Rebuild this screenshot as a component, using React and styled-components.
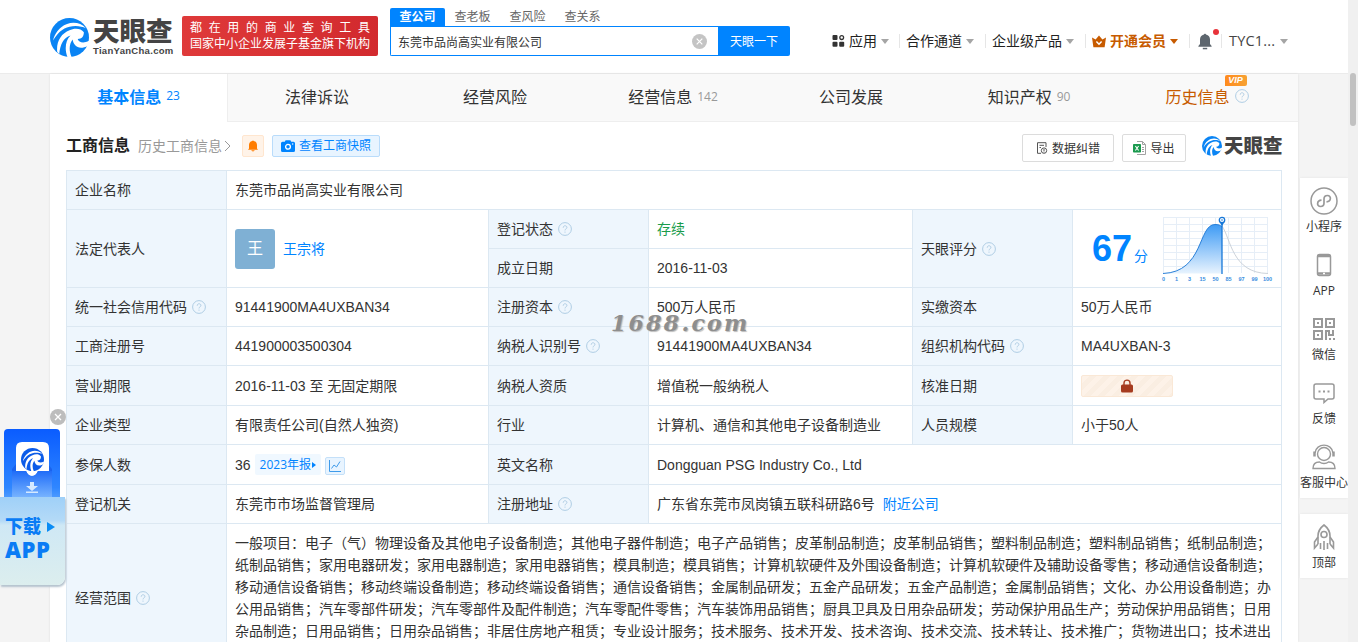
import React, { useState } from 'react';
import styled, { createGlobalStyle } from 'styled-components';

const blue = '#0084ff';
const line = '#dce8f2';

// --- 스타일 정의 (styled-components) --- //

const GlobalStyle = createGlobalStyle`
  * { box-sizing: border-box; }

  body {
    margin: 0;
    overflow: hidden;
    background: #f4f4f4;
    color: #333;
    font-family: "Liberation Sans", "Noto Sans CJK SC", sans-serif;
    font-size: 14px;
    text-spacing-trim: space-all;
  }

  button {
    padding: 0;
    font-family: inherit;
    cursor: pointer;
  }

  svg { display: block; flex: none; }
`;

const PageWrapper = styled.div`
  position: relative;
  display: flex;
  width: 1358px;
  height: 642px;
  overflow: hidden;
`;

const Page = styled.div`
  width: 1348px;
`;

const Scrollbar = styled.div`
  width: 10px;
  padding: 73px 2px 0;
  background: #f0f0f0;
`;

const ScrollThumb = styled.div`
  height: 53px;
  border-radius: 3px;
  background: #c1c1c1;
`;

const Header = styled.header`
  display: flex;
  align-items: flex-start;
  height: 74px;
  padding-left: 50px;
  background: #fff;
  border-bottom: 1px solid #ebebeb;
`;

const LogoBox = styled.div`
  display: flex;
  gap: 4px;
  width: 132px;
  padding-top: 18px;
`;

const LogoText = styled.div`
  display: flex;
  flex-direction: column;

  .name {
    height: 26px;
    line-height: 28px;
    font-size: 26.5px;
    font-weight: 900;
    color: #444;
    white-space: nowrap;
  }

  .domain {
    margin-top: 1px;
    line-height: 11px;
    font-size: 9.5px;
    font-weight: bold;
    letter-spacing: 0.3px;
    color: #444;
  }
`;

const Slogan = styled.div`
  width: 196px;
  height: 40px;
  margin-top: 16px;
  padding: 4px 8px;
  border-radius: 2px;
  background: linear-gradient(90deg, #df3a3a, #d22a2e);
  color: #fff;
  font-size: 12px;
  line-height: 16px;
  white-space: nowrap;

  .spread {
    display: flex;
    justify-content: space-between;
  }
`;

const SearchBox = styled.div`
  width: 400px;
  margin: 8px 42px 0 12px;
`;

const SearchTabs = styled.div`
  display: flex;
  height: 18px;
`;

const SearchTab = styled.div`
  width: 55px;
  line-height: 18px;
  border-radius: 2px 2px 0 0;
  background: ${({ $active }) => ($active ? blue : 'transparent')};
  color: ${({ $active }) => ($active ? '#fff' : '#666')};
  font-size: 12px;
  font-weight: ${({ $active }) => ($active ? 700 : 400)};
  text-align: center;
`;

const SearchRow = styled.div`
  display: flex;
  height: 30px;
`;

const SearchField = styled.div`
  display: flex;
  align-items: center;
  justify-content: space-between;
  width: 328px;
  padding: 0 11px 0 7px;
  border: 1px solid ${blue};
  border-right: none;
  border-radius: 0 0 0 2px;

  input {
    flex: 1;
    padding: 0;
    border: none;
    outline: none;
    background: none;
    color: #333;
    font-family: inherit;
    font-size: 12px;
  }
`;

const SearchButton = styled.button`
  width: 72px;
  padding-bottom: 2px;
  border: none;
  border-radius: 0 2px 2px 0;
  background: ${blue};
  color: #fff;
  font-size: 12px;
`;

const Nav = styled.nav`
  display: flex;
  align-items: center;
  height: 14px;
  margin-top: 34px;
`;

const NavItem = styled.div`
  display: flex;
  align-items: center;
  gap: 4px;
  height: 14px;
  padding: ${({ $first }) => ($first ? '0 10px 0 0' : '0 11px 0 6px')};
  border-left: ${({ $first }) => ($first ? 'none' : '1px solid #e6e6e6')};
  color: ${({ $vip }) => ($vip ? '#c75b00' : '#222')};
  font-weight: ${({ $vip }) => ($vip ? 700 : 400)};
  line-height: 14px;
  white-space: nowrap;
`;

const UserName = styled.span`
  width: 47px;
  margin-left: 1px;
  font-family: "Open Sans", sans-serif;
  font-size: 14.5px;
  letter-spacing: 0.2px;
  color: #444;
`;

const BellBox = styled.div`
  position: relative;
  margin: 0 -2px 0 2px;

  .dot {
    position: absolute;
    top: -4px;
    right: -7px;
    width: 6px;
    height: 6px;
    border-radius: 50%;
    background: #e8333a;
  }
`;

const Caret = styled.i`
  border: 4px solid transparent;
  border-top: 5px solid ${({ $vip }) => ($vip ? '#c75b00' : '#a5a5a5')};
  border-bottom: none;
`;

const Body = styled.div`
  display: flex;
  padding-left: 50px;
`;

const Main = styled.main`
  width: 1248px;
  height: 568px;
  background: #fff;
  box-shadow: 0 0 2px #ddd;
`;

const Tabs = styled.div`
  display: flex;
  height: 48px;
  border-bottom: 1px solid #eee;
  background: #f9f9f9;
`;

const Tab = styled.div`
  flex: none;
  display: flex;
  align-items: center;
  justify-content: center;
  gap: 5px;
  width: 178px;
  padding-bottom: ${({ $active }) => ($active ? 5 : 3)}px;
  background: ${({ $active }) => ($active ? '#fff' : 'transparent')};
  border-right: ${({ $active }) => ($active ? '1px solid #eee' : 'none')};
  margin-bottom: ${({ $active }) => ($active ? '-1px' : '0')};
  color: ${({ $active, $vip }) => ($active ? blue : $vip ? '#c75b00' : '#333')};
  font-size: 16px;
  font-weight: ${({ $active }) => ($active ? 700 : 400)};

  .count {
    color: ${({ $active }) => ($active ? blue : '#999')};
    font-family: "Open Sans", sans-serif;
    font-size: 12px;
    font-weight: 400;
  }
`;

const TabHelp = styled.span`
  position: relative;
`;

const VipBadge = styled.span`
  position: absolute;
  top: -14px;
  left: -10px;
  width: 22px;
  height: 11px;
  border-radius: 2px 2px 2px 0;
  background: linear-gradient(90deg, #ff8a1e, #f7a233);
  color: #fff;
  font-size: 9px;
  font-style: italic;
  font-weight: bold;
  line-height: 11px;
  text-align: center;
`;

const SectionHead = styled.div`
  display: flex;
  align-items: center;
  height: 48px;
  padding: 0 16px;

  h2 {
    margin: 0 8px 0 0;
    font-size: 16px;
    line-height: 20px;
    color: #222;
  }

  .history {
    display: flex;
    align-items: center;
    gap: 1px;
    width: 104px;
    line-height: 20px;
    color: #999;
  }
`;

const BellTag = styled.span`
  display: flex;
  align-items: center;
  justify-content: center;
  width: 22px;
  height: 22px;
  border: 1px solid #ffe6cf;
  border-radius: 2px;
  background: #fff3e8;
`;

const SnapshotTag = styled.span`
  display: flex;
  align-items: center;
  justify-content: center;
  gap: 4px;
  width: 108px;
  height: 22px;
  margin-left: 8px;
  border: 1px solid #b9dcfb;
  border-radius: 2px;
  background: #e8f4ff;
  color: ${blue};
  font-size: 12px;
  line-height: 18px;
`;

const HeadActions = styled.div`
  display: flex;
  align-items: center;
  margin: 3px 0 0 auto;
`;

const ActionButton = styled.button`
  display: flex;
  align-items: center;
  justify-content: center;
  gap: 4px;
  width: ${({ $width }) => $width}px;
  height: 28px;
  margin-right: ${({ $gap }) => $gap}px;
  border: 1px solid #dcdcdc;
  border-radius: 2px;
  background: #fff;
  color: #333;
  font-size: 12px;
`;

const SmallLogo = styled.div`
  display: flex;
  align-items: center;
  gap: 2px;
  width: 80px;
  margin-top: -4px;
  font-size: 19.5px;
  font-weight: 900;
  line-height: 20px;
  color: #444;
  white-space: nowrap;
`;

const InfoGrid = styled.div`
  display: grid;
  grid-template-columns: 159px 261px 159px 263px 159px 208px;
  grid-template-rows: 38px 38px 38px 38px 38px 39px 38px 39px 38px 148px;
  gap: 1px;
  width: 1216px;
  margin: 0 16px;
  border: 1px solid ${line};
  background: ${line};
`;

const Cell = styled.div`
  display: flex;
  align-items: center;
  grid-row: span ${({ $rows }) => $rows || 1};
  grid-column: span ${({ $cols }) => $cols || 1};
  padding: 0 8px;
  background: ${({ $label }) => ($label ? '#eef6fd' : '#fff')};
  color: ${({ $color }) => $color || '#333'};
  line-height: 20px;
  white-space: nowrap;

  svg.help { margin-left: 5px; }
`;

const Avatar = styled.span`
  width: 40px;
  height: 40px;
  margin-right: 8px;
  border-radius: 3px;
  background: #7fb0d4;
  color: #fff;
  font-size: 16px;
  line-height: 40px;
  text-align: center;
`;

const Link = styled.a`
  color: ${blue};
  margin-left: ${({ $gap }) => $gap || 0}px;
`;

const Score = styled.div`
  display: flex;
  align-items: baseline;
  gap: 2px;
  width: 70px;
  margin-left: 11px;
  color: ${blue};

  b {
    font-size: 36px;
    line-height: 40px;
  }
`;

const LockedValue = styled.span`
  display: flex;
  align-items: center;
  justify-content: center;
  width: 92px;
  height: 22px;
  border: 1px solid #fae8d6;
  border-radius: 2px;
  background: repeating-linear-gradient(135deg, #fdf2e8 0 5px, #faeee2 5px 10px);
`;

const ReportTag = styled.span`
  display: flex;
  align-items: center;
  gap: 1px;
  height: 21px;
  margin: 0 4px;
  padding: 0 5px;
  border-radius: 2px;
  background: #f0f8ff;
  color: ${blue};
  font-family: "Open Sans", "Noto Sans CJK SC", sans-serif;
  font-size: 12px;

  i {
    border: 3px solid transparent;
    border-left: 4px solid ${blue};
    border-right: none;
  }
`;

const TrendTag = styled.span`
  display: flex;
  align-items: center;
  justify-content: center;
  width: 20px;
  height: 18px;
  margin-top: 2px;
  border: 1px solid #c4e0f9;
  border-radius: 2px;
  background: #e8f4ff;
`;

const Scope = styled.div`
  align-self: flex-start;
  padding-top: 8px;
  line-height: 22px;
`;

const SideBar = styled.aside`
  display: flex;
  flex-direction: column;
  gap: 16px;
  width: 48px;
  margin-left: 2px;
  padding-top: 104px;
`;

const SideGroup = styled.div`
  background: #fff;
  box-shadow: 0 0 2px #e4e4e4;
`;

const SideItem = styled.div`
  display: flex;
  flex-direction: column;
  align-items: center;
  justify-content: space-between;
  height: 64px;
  padding: 8px 0 6px;
  font-family: "Open Sans", "Noto Sans CJK SC", sans-serif;
  font-size: 12px;
  line-height: 18px;
  white-space: nowrap;

  .icon {
    display: flex;
    align-items: center;
    height: 30px;
  }
`;

const Watermark = styled.div`
  position: absolute;
  top: 315px;
  left: 611px;
  color: #8e8e8e;
  font-family: "DejaVu Serif", serif;
  font-size: 22px;
  font-style: italic;
  font-weight: bold;
  line-height: 16px;
  letter-spacing: 2.3px;
  text-shadow: 1px 1px 1px #bbb;
`;

const Download = styled.div`
  position: absolute;
  top: 429px;
  left: 0;
  width: 65px;
  height: 157px;
`;

const DownloadTop = styled.div`
  width: 56px;
  height: 90px;
  margin-left: 3.5px;
  border-radius: 4px 4px 0 0;
  background: linear-gradient(#0a5cff, #2f86ff 65%, #8cc6ff);
`;

const DownloadCard = styled.div`
  position: relative;
  display: flex;
  flex-direction: column;
  height: 88px;
  margin-top: -22px;
  padding: 20px 0 0 5px;
  border-radius: 0 0 8px 0;
  background: linear-gradient(#9fd0f8, #b4daf7 27%, #cfe8f5 32%, #dceeee);
  box-shadow: 1px 2px 2px #b5c3ce;
  color: #0a7cf5;
  font-weight: 900;

  .row {
    display: flex;
    align-items: center;
    gap: 6px;
    font-size: 18px;
    line-height: 20px;
    white-space: nowrap;
  }

  .row i {
    border: 5px solid transparent;
    border-left: 8px solid #0a8cf5;
    border-right: none;
  }

  .app {
    font-family: "Open Sans", sans-serif;
    font-size: 22px;
    line-height: 25px;
    letter-spacing: 0.6px;
  }
`;

const DownloadClose = styled.div`
  position: absolute;
  top: 409px;
  left: 50px;
`;

// --- 아이콘 --- //

const Swirl = ({ size, color = '#0a84f4', bg = '#fff' }) => (
  <svg width={size} height={size} viewBox="0 0 38 38">
    <circle cx="19" cy="19" r="19" fill={color} />
    <g fill={bg}>
      <path d="M35 10C29 3 18 3 11 9C7 12 4 17 3 22C7 15 12 10 19 8.500C25 7 31 8 35 10Z" />
      <path d="M33 14C30 9.500 23 10 19 12C11 15 6 23 7 33L9 35C10 26 13 19 20 17C15 22 14 30 17 38L21 38C18 31 19 25 22 21C23 27 28 32 37 27L38.500 22C33 25 28 24 27 20.500C31 20.500 33 18 33 14Z" />
    </g>
  </svg>
);

const HelpIcon = () => (
  <svg className="help" width="14" height="14" viewBox="0 0 14 14" fill="none" stroke="#afcde4">
    <circle cx="7" cy="7" r="6.4" />
    <path d="M5.2 5.7C5.2 3.1 8.9 3.2 8.9 5.5C8.9 6.9 7 6.8 7 8.4" />
    <path d="M7 9.6V10.7" />
  </svg>
);

const CloseIcon = ({ size, fill = '#c4c4c4' }) => (
  <svg width={size} height={size} viewBox="0 0 16 16">
    <circle cx="8" cy="8" r="8" fill={fill} />
    <path d="M5 5L11 11M11 5L5 11" stroke="#fff" strokeWidth="1.3" />
  </svg>
);

const AppsIcon = () => (
  <svg width="13" height="12" viewBox="0 0 13 12" fill="#333">
    <rect x="0.5" width="5" height="5" rx="1" />
    <rect x="0.5" y="6.7" width="5" height="5" rx="1" />
    <rect x="7.2" y="6.7" width="5" height="5" rx="1" />
    <circle cx="9.7" cy="2.6" r="1.9" fill="none" stroke="#333" strokeWidth="1.3" />
  </svg>
);

const CrownIcon = () => (
  <svg width="14" height="13" viewBox="0 0 14 13">
    <path d="M0 2.5L3.6 4.6L7 0.5L10.4 4.6L14 2.5L12.6 12.2H1.4Z" fill="#c75b00" />
    <path d="M4.4 6.5L7 9.2L9.6 6.5" fill="none" stroke="#fff" strokeWidth="1.5" />
  </svg>
);

const BellIcon = () => (
  <svg width="14" height="17" viewBox="0 0 14 17" fill="#5d666e">
    <path d="M6 1.4C6 0.4 8 0.4 8 1.4C10.6 2 12 4 12 6.5V11L13.6 13V13.8H0.4V13L2 11V6.5C2 4 3.4 2 6 1.4Z" />
    <rect x="4.8" y="14.8" width="4.4" height="1.5" />
  </svg>
);

const SmallBell = () => (
  <svg width="10" height="12" viewBox="0 0 10 12" fill="#ff7d00">
    <path d="M4.2 0.9C4.2 0.2 5.8 0.2 5.8 0.9C8 1.3 9 3 9 5V8.4L10 9.8H0L1 8.4V5C1 3 2 1.3 4.2 0.9Z" />
    <path d="M3.4 10.3H6.6C6.6 11.8 3.4 11.8 3.4 10.3Z" />
  </svg>
);

const CameraIcon = () => (
  <svg width="14" height="12" viewBox="0 0 14 12">
    <path d="M1.5 1.8H3.8L4.6 0.3H9.4L10.2 1.8H12.5Q14 1.8 14 3.3V10.4Q14 11.9 12.5 11.9H1.5Q0 11.9 0 10.4V3.3Q0 1.8 1.5 1.8Z" fill={blue} />
    <circle cx="7" cy="6.8" r="2.4" fill="none" stroke="#fff" strokeWidth="1.3" />
    <circle cx="11.7" cy="4" r="0.7" fill="#fff" />
  </svg>
);

const CorrectIcon = () => (
  <svg width="12" height="12" viewBox="0 0 12 12" fill="none" stroke="#555">
    <path d="M5 11.3H1.5V0.7H10V5M3.5 3.3H8M3.5 5.5H5" />
    <circle cx="8" cy="8.6" r="2.7" />
    <path d="M8 7V9.2M8 9.7V10.3" />
  </svg>
);

const ExcelIcon = () => (
  <svg width="13" height="14" viewBox="0 0 13 14">
    <path d="M4 0.5H9.5L12.5 3.5V13.5H4M9.5 0.5V3.5H12.5M9 6.5H11M9 8.5H11M9 10.5H11" fill="none" stroke="#a2a2a2" />
    <rect y="3" width="8" height="8.5" rx="0.8" fill="#1b9a4f" />
    <path d="M2.4 5L5.6 9.5M5.6 5L2.4 9.5" stroke="#fff" strokeWidth="1.1" />
  </svg>
);

const LockIcon = () => (
  <svg width="12" height="14" viewBox="0 0 12 14">
    <path d="M3 6V4C3 0.1 9 0.1 9 4V6" fill="none" stroke="#a63b1f" strokeWidth="1.4" />
    <rect y="5.5" width="12" height="8" rx="1.5" fill="#a63b1f" />
  </svg>
);

const TrendIcon = () => (
  <svg width="12" height="12" viewBox="0 0 12 12" fill="none" stroke="#3f9bea">
    <path d="M0.5 0V11.5H12M2.5 8.5L5 5L7.5 7L11 1.5" />
  </svg>
);

const ScoreChart = () => {
  const ticks = ['0', '1', '3', '15', '50', '85', '97', '99', '100'];
  return (
    <svg width="114" height="68" viewBox="0 0 114 68">
      <defs>
        <linearGradient id="area" x1="0" y1="0" x2="0" y2="1">
          <stop offset="0" stopColor="#3e9bf5" />
          <stop offset="1" stopColor="#e8f3fe" />
        </linearGradient>
      </defs>
      <g stroke="#e6eef7" strokeWidth="1">
        {ticks.map((t, i) => <path key={t} d={`M${4.5 + i * 13} 2V58`} />)}
        {[0, 1, 2, 3, 4, 5, 6, 7].map((i) => <path key={i} d={`M4 ${2.5 + i * 7}H109`} />)}
      </g>
      <path d="M63 11C72 24 73 58 109 58.5" fill="none" stroke="#ccd2d9" />
      <path d="M4 58.5C45 57 39 9.500 56 9.500C59 9.500 61.500 10 63 12V58.500Z" fill="url(#area)" />
      <path d="M4 58.500C45 57 39 9.500 56 9.500C59 9.500 61.500 10 63 12" fill="none" stroke="#2a80d8" />
      <path d="M63 8V59" stroke="#1677d8" strokeWidth="1.3" />
      <path d="M60.500 7L63 11L65.500 7Z" fill="#1677d8" />
      <circle cx="63" cy="5" r="2.700" fill="#fff" stroke="#1677d8" strokeWidth="1.3" />
      <circle cx="63" cy="5" r="0.800" fill="#1677d8" />
      <g fill="#3a8ee0" fontSize="5.5" textAnchor="middle" fontWeight="bold">
        {ticks.map((t, i) => <text key={t} x={4.5 + i * 13} y="66">{t}</text>)}
      </g>
    </svg>
  );
};

const sideIcons = {
  mini: (
    <svg width="28" height="28" viewBox="0 0 28 28" fill="none" stroke="#999" strokeWidth="1.5">
      <circle cx="14" cy="14" r="13" />
      <path d="M11.500 13.200C6.500 13.500 6.500 19.500 10.500 19.500C13 19.500 14 18 14 16V12C14 10 15.300 8.500 17.500 8.500C21.500 8.500 21.500 14.500 16.500 14.800" strokeWidth="1.7" />
    </svg>
  ),
  phone: (
    <svg width="16" height="24" viewBox="0 0 16 24" fill="none" stroke="#999" strokeWidth="1.5">
      <rect x="1.500" y="1.500" width="13" height="21" rx="2" />
      <path d="M2 3H14M2 20.500H14" strokeWidth="2.500" />
      <path d="M7 20.500H9" stroke="#fff" />
    </svg>
  ),
  qr: (
    <svg width="22" height="22" viewBox="0 0 22 22" fill="none" stroke="#999" strokeWidth="2">
      <rect x="1" y="1" width="8" height="8" />
      <rect x="13" y="1" width="8" height="8" />
      <rect x="1" y="13" width="8" height="8" />
      <path d="M4 5H6M16 5H18M4 17H6M13 22V13H16V17H20V12M16 21H18M20 21H22" />
    </svg>
  ),
  chat: (
    <svg width="22" height="22" viewBox="0 0 22 22" fill="none" stroke="#999" strokeWidth="1.5">
      <path d="M3 2H19Q21 2 21 4V15Q21 17 19 17H15L11 20.500V17H3Q1 17 1 15V4Q1 2 3 2Z" />
      <path d="M5.500 9.500H7.500M10 9.500H12M14.500 9.500H16.500" strokeWidth="2" />
    </svg>
  ),
  service: (
    <svg width="24" height="26" viewBox="0 0 24 26" fill="none" stroke="#999" strokeWidth="1.400">
      <circle cx="12" cy="10" r="6.500" />
      <path d="M3 9C4 -1.500 20 -1.500 21 9" />
      <path d="M2.500 7.500V12.500M21.500 7.500V12.500" strokeWidth="2.500" />
      <path d="M1 24.500C1 20 4 18 7.500 18C10 20 14 20 16.500 18C20 18 23 20 23 24.500Z" />
    </svg>
  ),
  rocket: (
    <svg width="22" height="27" viewBox="0 0 22 27" fill="none" stroke="#999" strokeWidth="1.600">
      <path d="M5 20V12C5 8 7 4 11 1C15 4 17 8 17 12V20" />
      <circle cx="11" cy="10.500" r="3" />
      <path d="M5 13L1.500 18V24L5 20M17 13L20.500 18V24L17 20M7.500 19V25M11 17V26M14.500 19V25" />
    </svg>
  ),
};

const DownloadArt = () => (
  <svg width="56" height="70" viewBox="0 0 56 70">
    <defs>
      <linearGradient id="pocket" x1="0" y1="0" x2="0" y2="1">
        <stop offset="0" stopColor="#1f6cf8" />
        <stop offset="1" stopColor="#7db8ff" />
      </linearGradient>
    </defs>
    <path d="M8 70V40L12 35H44L48 40V70Z" fill="#1a63ee" />
    <path d="M18 13H39Q45 13 45 19V42H34Q32 47 28 47Q24 47 22 42H12V19Q12 13 18 13Z" fill="#fff" />
    <path d="M8 42H22Q24 47 28 47Q32 47 34 42H48V70H8Z" fill="url(#pocket)" />
    <path d="M26 53H30V57H34L28 62L22 57H26ZM22 62.500H34V64H22Z" fill="#d5e9ff" />
    <g transform="translate(17 19)"><Swirl size={23} color="#0b5be8" /></g>
  </svg>
);

// --- 데이터 --- //

const tabs = [
  { name: '基本信息', count: 23 },
  { name: '法律诉讼' },
  { name: '经营风险' },
  { name: '经营信息', count: 142 },
  { name: '公司发展' },
  { name: '知识产权', count: 90 },
  { name: '历史信息', vip: true },
];

const sideItems = [
  ['mini', '小程序'],
  ['phone', 'APP'],
  ['qr', '微信'],
  ['chat', '反馈'],
  ['service', '客服中心'],
];

const scope = [
  '一般项目：电子（气）物理设备及其他电子设备制造；其他电子器件制造；电子产品销售；皮革制品制造；皮革制品销售；塑料制品制造；塑料制品销售；纸制品制造；',
  '纸制品销售；家用电器研发；家用电器制造；家用电器销售；模具制造；模具销售；计算机软硬件及外围设备制造；计算机软硬件及辅助设备零售；移动通信设备制造；',
  '移动通信设备销售；移动终端设备制造；移动终端设备销售；通信设备销售；金属制品研发；五金产品研发；五金产品制造；金属制品销售；文化、办公用设备制造；办',
  '公用品销售；汽车零部件研发；汽车零部件及配件制造；汽车零配件零售；汽车装饰用品销售；厨具卫具及日用杂品研发；劳动保护用品生产；劳动保护用品销售；日用',
  '杂品制造；日用品销售；日用杂品销售；非居住房地产租赁；专业设计服务；技术服务、技术开发、技术咨询、技术交流、技术转让、技术推广；货物进出口；技术进出',
];

const Label = ({ children, help, rows }) => (
  <Cell $label $rows={rows}>
    {children}
    {help && <HelpIcon />}
  </Cell>
);

// --- React 컴포넌트 --- //

function App() {
  const [keyword, setKeyword] = useState('东莞市品尚高实业有限公司');
  const [activeTab, setActiveTab] = useState('基本信息');

  return (
    <PageWrapper>
      <GlobalStyle />
      <Page>
        <Header>
          <LogoBox>
            <Swirl size={39} />
            <LogoText>
              <span className="name">天眼查</span>
              <span className="domain">TianYanCha.com</span>
            </LogoText>
          </LogoBox>
          <Slogan>
            <div className="spread">
              {[...'都在用的商业查询工具'].map((c) => <span key={c}>{c}</span>)}
            </div>
            <div>国家中小企业发展子基金旗下机构</div>
          </Slogan>
          <SearchBox>
            <SearchTabs>
              {['查公司', '查老板', '查风险', '查关系'].map((t, i) => (
                <SearchTab key={t} $active={i === 0}>{t}</SearchTab>
              ))}
            </SearchTabs>
            <SearchRow>
              <SearchField>
                <input value={keyword} onChange={(e) => setKeyword(e.target.value)} />
                <CloseIcon size={15} />
              </SearchField>
              <SearchButton>天眼一下</SearchButton>
            </SearchRow>
          </SearchBox>
          <Nav>
            <NavItem $first><AppsIcon />应用<Caret /></NavItem>
            <NavItem>合作通道<Caret /></NavItem>
            <NavItem>企业级产品<Caret /></NavItem>
            <NavItem $vip><CrownIcon />开通会员<Caret $vip /></NavItem>
            <NavItem>
              <BellBox>
                <BellIcon />
                <span className="dot" />
              </BellBox>
            </NavItem>
            <NavItem><UserName>TYC1...</UserName><Caret /></NavItem>
          </Nav>
        </Header>

        <Body>
          <Main>
            <Tabs>
              {tabs.map((t) => (
                <Tab
                  key={t.name}
                  $active={t.name === activeTab}
                  $vip={t.vip}
                  onClick={() => setActiveTab(t.name)}
                >
                  {t.name}
                  {t.count && <span className="count">{t.count}</span>}
                  {t.vip && <TabHelp><VipBadge>VIP</VipBadge><HelpIcon /></TabHelp>}
                </Tab>
              ))}
            </Tabs>

            <SectionHead>
              <h2>工商信息</h2>
              <span className="history">
                历史工商信息
                <svg width="8" height="12" viewBox="0 0 8 12" fill="none" stroke="#999">
                  <path d="M2 1L7 6L2 11" />
                </svg>
              </span>
              <BellTag><SmallBell /></BellTag>
              <SnapshotTag><CameraIcon />查看工商快照</SnapshotTag>
              <HeadActions>
                <ActionButton $width={92} $gap={8}><CorrectIcon />数据纠错</ActionButton>
                <ActionButton $width={64} $gap={16}><ExcelIcon />导出</ActionButton>
                <SmallLogo><Swirl size={20} />天眼查</SmallLogo>
              </HeadActions>
            </SectionHead>

            <InfoGrid>
              <Label>企业名称</Label>
              <Cell $cols={5}>东莞市品尚高实业有限公司</Cell>

              <Label rows={2}>法定代表人</Label>
              <Cell $rows={2}><Avatar>王</Avatar><Link>王宗将</Link></Cell>
              <Label help>登记状态</Label>
              <Cell $color="#1a9c4c">存续</Cell>
              <Label rows={2} help>天眼评分</Label>
              <Cell $rows={2}><Score><b>67</b>分</Score><ScoreChart /></Cell>
              <Label>成立日期</Label>
              <Cell>2016-11-03</Cell>

              <Label help>统一社会信用代码</Label>
              <Cell>91441900MA4UXBAN34</Cell>
              <Label help>注册资本</Label>
              <Cell>500万人民币</Cell>
              <Label>实缴资本</Label>
              <Cell>50万人民币</Cell>

              <Label>工商注册号</Label>
              <Cell>441900003500304</Cell>
              <Label help>纳税人识别号</Label>
              <Cell>91441900MA4UXBAN34</Cell>
              <Label help>组织机构代码</Label>
              <Cell>MA4UXBAN-3</Cell>

              <Label>营业期限</Label>
              <Cell>2016-11-03 至 无固定期限</Cell>
              <Label>纳税人资质</Label>
              <Cell>增值税一般纳税人</Cell>
              <Label>核准日期</Label>
              <Cell><LockedValue><LockIcon /></LockedValue></Cell>

              <Label>企业类型</Label>
              <Cell>有限责任公司(自然人独资)</Cell>
              <Label>行业</Label>
              <Cell>计算机、通信和其他电子设备制造业</Cell>
              <Label>人员规模</Label>
              <Cell>小于50人</Cell>

              <Label>参保人数</Label>
              <Cell>
                36
                <ReportTag>2023年报<i /></ReportTag>
                <TrendTag><TrendIcon /></TrendTag>
              </Cell>
              <Label>英文名称</Label>
              <Cell $cols={3}>Dongguan PSG Industry Co., Ltd</Cell>

              <Label>登记机关</Label>
              <Cell>东莞市市场监督管理局</Cell>
              <Label help>注册地址</Label>
              <Cell $cols={3}>广东省东莞市凤岗镇五联科研路6号<Link $gap={8}>附近公司</Link></Cell>

              <Label help>经营范围</Label>
              <Cell $cols={5}>
                <Scope>
                  {scope.map((s) => <div key={s}>{s}</div>)}
                </Scope>
              </Cell>
            </InfoGrid>
          </Main>

          <SideBar>
            <SideGroup>
              {sideItems.map(([icon, name]) => (
                <SideItem key={name}>
                  <span className="icon">{sideIcons[icon]}</span>
                  {name}
                </SideItem>
              ))}
            </SideGroup>
            <SideGroup>
              <SideItem>
                <span className="icon">{sideIcons.rocket}</span>
                顶部
              </SideItem>
            </SideGroup>
          </SideBar>
        </Body>
      </Page>
      <Scrollbar><ScrollThumb /></Scrollbar>

      <Watermark>1688.com</Watermark>
      <Download>
        <DownloadTop><DownloadArt /></DownloadTop>
        <DownloadCard>
          <span className="row">下载<i /></span>
          <span className="app">APP</span>
        </DownloadCard>
      </Download>
      <DownloadClose><CloseIcon size={16} fill="#bdbdbd" /></DownloadClose>
    </PageWrapper>
  );
}

export default App;
